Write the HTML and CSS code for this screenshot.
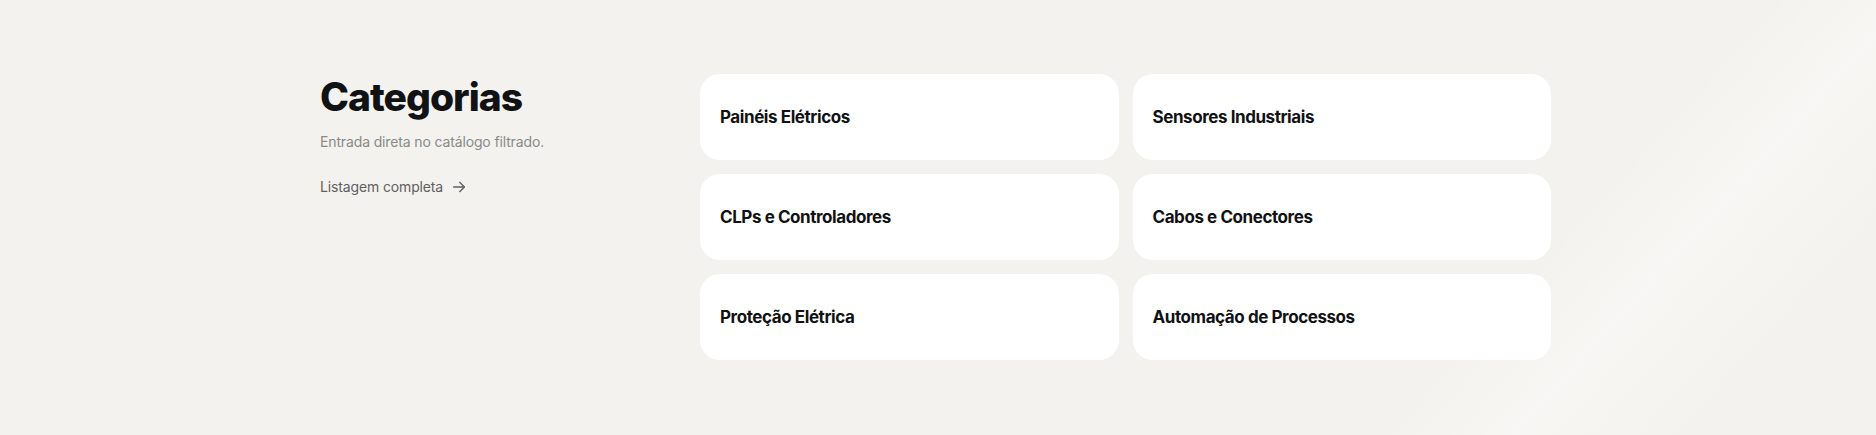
FILE: index.html
```html
<!DOCTYPE html>
<html lang="pt-BR">
<head>
    <meta charset="UTF-8">
    <meta name="viewport" content="width=device-width, initial-scale=1.0">
    <title>Categorias</title>
    <link rel="stylesheet" href="styles.css">
</head>
<body>
    <section class="categories">
        <div class="categories-intro">
            <h2 class="categories-title">Categorias</h2>
            <p class="categories-lead">Entrada direta no catálogo filtrado.</p>
            <a class="categories-link" href="#">
                Listagem completa
                <svg width="16" height="16" viewBox="0 0 24 24" fill="none" stroke="currentColor" stroke-width="2" stroke-linecap="round" stroke-linejoin="round">
                    <path d="M4 12h16"/>
                    <path d="M13 5l7 7-7 7"/>
                </svg>
            </a>
        </div>

        <div class="categories-grid">
            <a class="category-card" href="#">Painéis Elétricos</a>
            <a class="category-card" href="#">Sensores Industriais</a>
            <a class="category-card" href="#">CLPs e Controladores</a>
            <a class="category-card" href="#">Cabos e Conectores</a>
            <a class="category-card" href="#">Proteção Elétrica</a>
            <a class="category-card" href="#">Automação de Processos</a>
        </div>
    </section>
</body>
</html>
```

FILE: styles.css
```css
body {
    margin: 0;
    min-height: 435px;
    font-family: Inter, "Noto Sans", sans-serif;
    color: #111214;
    background-color: #f3f2ee;
    background-image: linear-gradient(132deg, rgba(255, 255, 255, 0) 78%, rgba(255, 255, 255, 0.35) 84%, rgba(255, 255, 255, 0) 92%);
}

.categories {
    display: grid;
    grid-template-columns: 380px 1fr;
    padding: 74px 325px 0 320px;
}

.categories-title {
    margin: 4px 0 0;
    font-size: 39px;
    line-height: 38px;
    font-weight: 800;
    letter-spacing: -0.025em;
}

.categories-lead {
    margin: 16px 0 0;
    font-size: 14px;
    line-height: 20px;
    color: #8a8a88;
    letter-spacing: -0.01em;
}

.categories-link {
    display: inline-flex;
    align-items: center;
    gap: 8px;
    margin-top: 25px;
    font-size: 14px;
    line-height: 20px;
    color: #5f5f5e;
    text-decoration: none;
    letter-spacing: -0.01em;
}

.categories-grid {
    display: grid;
    grid-template-columns: 1fr 1fr;
    grid-auto-rows: 86px;
    gap: 14px;
}

.category-card {
    display: flex;
    align-items: center;
    padding: 0 20px;
    background: #fff;
    border-radius: 20px;
    color: #111214;
    text-decoration: none;
    font-size: 17px;
    font-weight: 650;
    letter-spacing: -0.025em;
}
```
